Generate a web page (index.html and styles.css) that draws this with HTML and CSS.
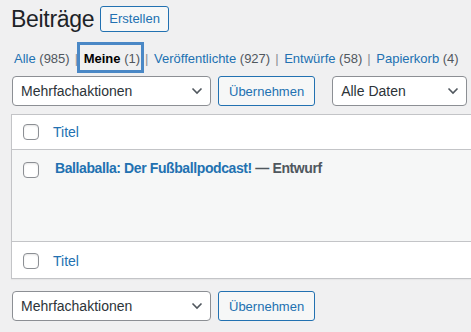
FILE: index.html
```html
<!DOCTYPE html>
<html lang="de">
<head>
    <meta charset="UTF-8">
    <meta name="viewport" content="width=device-width, initial-scale=1.0">
    <title>Beiträge</title>
    <link rel="stylesheet" href="styles.css">
</head>
<body>

<div class="wrap">
    <div class="page-header">
        <h1>Beiträge</h1>
        <a href="#" class="page-title-action">Erstellen</a>
    </div>

    <ul class="subsubsub">
        <li><a href="#">Alle <span class="count">(985)</span></a><span class="sep">|</span></li>
        <li><a href="#" class="current">Meine <span class="count">(1)</span></a><span class="sep">|</span></li>
        <li><a href="#">Veröffentlichte <span class="count">(927)</span></a><span class="sep">|</span></li>
        <li><a href="#">Entwürfe <span class="count">(58)</span></a><span class="sep">|</span></li>
        <li><a href="#">Papierkorb <span class="count">(4)</span></a></li>
    </ul>

    <div class="tablenav">
        <div class="select-wrap bulk-select">
            <select><option>Mehrfachaktionen</option></select>
            <svg class="chevron" width="12" height="8" viewBox="0 0 12 8"><polyline points="1.5,1.5 6,6 10.5,1.5" /></svg>
        </div>
        <button class="button">Übernehmen</button>
        <div class="select-wrap date-select">
            <select><option>Alle Daten</option></select>
            <svg class="chevron" width="12" height="8" viewBox="0 0 12 8"><polyline points="1.5,1.5 6,6 10.5,1.5" /></svg>
        </div>
    </div>

    <table class="list-table">
        <thead>
            <tr>
                <th class="check-column"><input type="checkbox"></th>
                <th class="column-title"><a href="#">Titel</a></th>
            </tr>
        </thead>
        <tbody>
            <tr class="alternate">
                <td class="check-column"><input type="checkbox"></td>
                <td class="column-title"><strong><a href="#">Ballaballa: Der Fußballpodcast!</a> — <span class="post-state">Entwurf</span></strong></td>
            </tr>
        </tbody>
        <tfoot>
            <tr>
                <th class="check-column"><input type="checkbox"></th>
                <th class="column-title"><a href="#">Titel</a></th>
            </tr>
        </tfoot>
    </table>

    <div class="tablenav bottom">
        <div class="select-wrap bulk-select">
            <select><option>Mehrfachaktionen</option></select>
            <svg class="chevron" width="12" height="8" viewBox="0 0 12 8"><polyline points="1.5,1.5 6,6 10.5,1.5" /></svg>
        </div>
        <button class="button">Übernehmen</button>
    </div>
</div>

</body>
</html>
```

FILE: styles.css
```css
body { margin: 0; background: #f0f0f1; color: #3c434a; font-family: "Liberation Sans", Arial, sans-serif; font-size: 13px; overflow: hidden; }
a { color: #2271b1; text-decoration: none; }
.wrap { padding-left: 11px; }

.page-header { display: flex; align-items: center; gap: 6px; padding-top: 5px; }
.page-header h1 { margin: 0; font-size: 23px; font-weight: 400; line-height: 28px; color: #1d2327; letter-spacing: -0.3px; }
.page-title-action { display: inline-block; height: 24px; line-height: 24px; padding: 0 8px; border: 1px solid #2271b1; border-radius: 3px; background: #f6f7f7; font-size: 13px; }

.subsubsub { list-style: none; margin: 13px 0 0; padding: 0 0 0 3px; line-height: 26px; color: #8c8f94; font-size: 13px; white-space: nowrap; }
.subsubsub li { display: inline; }
.subsubsub .sep { margin: 0 2px 0 5px; }
.subsubsub a .count { color: #50575e; }
.subsubsub a.current { position: relative; color: #000; font-weight: 700; }
.subsubsub a.current .count { font-weight: 400; }
.subsubsub a.current::after { content: ""; position: absolute; left: -7px; right: -4px; top: -9px; bottom: -7px; border: 3px solid #4a88c6; }

.tablenav { display: flex; align-items: center; margin-top: 4px; padding-left: 1px; height: 30px; }
.tablenav.bottom { margin-top: 12px; }
.select-wrap { position: relative; }
.select-wrap select { appearance: none; -webkit-appearance: none; height: 30px; padding: 0 24px 0 8px; border: 1px solid #8c8f94; border-radius: 4px; background: #fff; color: #2c3338; font-family: inherit; font-size: 14px; }
.bulk-select select { width: 199px; }
.date-select { margin-left: 17px; }
.date-select select { width: 135px; }
.chevron { position: absolute; right: 8px; top: 11px; pointer-events: none; }
.chevron polyline { fill: none; stroke: #50575e; stroke-width: 1.6; }
.button { height: 30px; margin-left: 7px; padding: 0 10px; border: 1px solid #2271b1; border-radius: 3px; background: #f6f7f7; color: #2271b1; font-family: inherit; font-size: 13px; }

.list-table { width: 490px; margin-top: 8px; border-collapse: collapse; border: 1px solid #c3c4c7; background: #fff; box-shadow: 0 1px 1px rgba(0, 0, 0, 0.04); }
.list-table th { text-align: left; font-weight: 400; padding: 0; height: 34px; vertical-align: middle; font-size: 14px; }
.list-table thead th { border-bottom: 1px solid #c3c4c7; }
.list-table tfoot th { border-top: 1px solid #c3c4c7; height: 35px; padding-top: 1px; }
.list-table .check-column { width: 22px; padding-left: 11px; }
.list-table th.column-title { padding-left: 8px; }
.list-table tbody tr.alternate { background: #f6f7f7; }
.list-table tbody td { height: 79px; vertical-align: top; padding: 8px 0 0; font-size: 14px; line-height: 20px; }
.list-table tbody td.check-column { padding-top: 12px; }
.list-table tbody td.column-title { padding-left: 10px; }
.list-table tbody strong { font-weight: 700; color: #50575e; letter-spacing: -0.4px; }
.post-state { color: #50575e; }

input[type="checkbox"] { appearance: none; -webkit-appearance: none; display: block; width: 16px; height: 16px; margin: 0; border: 1px solid #8c8f94; border-radius: 4px; background: #fff; box-shadow: inset 0 1px 2px rgba(0, 0, 0, 0.1); }
```
